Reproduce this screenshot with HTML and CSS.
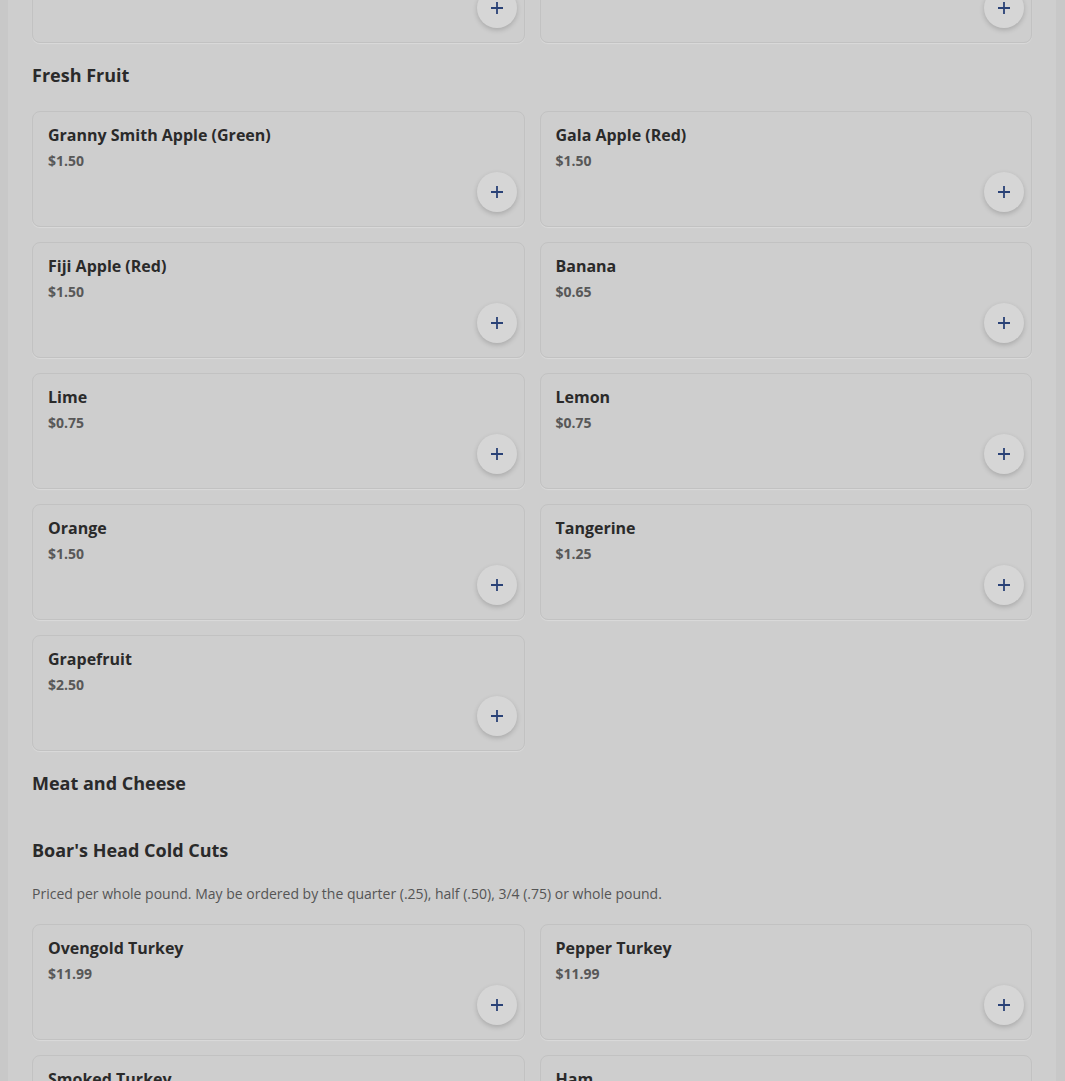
FILE: index.html
```html
<!DOCTYPE html>
<html lang="en">
<head>
<meta charset="utf-8">
<title>Menu</title>
<link rel="stylesheet" href="styles.css">
</head>
<body>
<main class="page">
  <section class="section section-prev">
    <div class="grid">
      <div class="card"><div class="card-title">&nbsp;</div><div class="card-price">&nbsp;</div><button class="add" aria-label="Add"><svg viewBox="0 0 16 16"><path d="M8 2v12M2 8h12"/></svg></button></div>
      <div class="card"><div class="card-title">&nbsp;</div><div class="card-price">&nbsp;</div><button class="add" aria-label="Add"><svg viewBox="0 0 16 16"><path d="M8 2v12M2 8h12"/></svg></button></div>
    </div>
  </section>

  <section class="section">
    <h2 class="heading">Fresh Fruit</h2>
    <div class="grid">
      <div class="card"><div class="card-title">Granny Smith Apple (Green)</div><div class="card-price">$1.50</div><button class="add" aria-label="Add"><svg viewBox="0 0 16 16"><path d="M8 2v12M2 8h12"/></svg></button></div>
      <div class="card"><div class="card-title">Gala Apple (Red)</div><div class="card-price">$1.50</div><button class="add" aria-label="Add"><svg viewBox="0 0 16 16"><path d="M8 2v12M2 8h12"/></svg></button></div>
      <div class="card"><div class="card-title">Fiji Apple (Red)</div><div class="card-price">$1.50</div><button class="add" aria-label="Add"><svg viewBox="0 0 16 16"><path d="M8 2v12M2 8h12"/></svg></button></div>
      <div class="card"><div class="card-title">Banana</div><div class="card-price">$0.65</div><button class="add" aria-label="Add"><svg viewBox="0 0 16 16"><path d="M8 2v12M2 8h12"/></svg></button></div>
      <div class="card"><div class="card-title">Lime</div><div class="card-price">$0.75</div><button class="add" aria-label="Add"><svg viewBox="0 0 16 16"><path d="M8 2v12M2 8h12"/></svg></button></div>
      <div class="card"><div class="card-title">Lemon</div><div class="card-price">$0.75</div><button class="add" aria-label="Add"><svg viewBox="0 0 16 16"><path d="M8 2v12M2 8h12"/></svg></button></div>
      <div class="card"><div class="card-title">Orange</div><div class="card-price">$1.50</div><button class="add" aria-label="Add"><svg viewBox="0 0 16 16"><path d="M8 2v12M2 8h12"/></svg></button></div>
      <div class="card"><div class="card-title">Tangerine</div><div class="card-price">$1.25</div><button class="add" aria-label="Add"><svg viewBox="0 0 16 16"><path d="M8 2v12M2 8h12"/></svg></button></div>
      <div class="card"><div class="card-title">Grapefruit</div><div class="card-price">$2.50</div><button class="add" aria-label="Add"><svg viewBox="0 0 16 16"><path d="M8 2v12M2 8h12"/></svg></button></div>
    </div>
  </section>

  <section class="section">
    <h2 class="heading">Meat and Cheese</h2>
    <section class="subsection">
      <h3 class="heading heading-sub">Boar's Head Cold Cuts</h3>
      <p class="desc">Priced per whole pound. May be ordered by the quarter (.25), half (.50), 3/4 (.75) or whole pound.</p>
      <div class="grid">
        <div class="card"><div class="card-title">Ovengold Turkey</div><div class="card-price">$11.99</div><button class="add" aria-label="Add"><svg viewBox="0 0 16 16"><path d="M8 2v12M2 8h12"/></svg></button></div>
        <div class="card"><div class="card-title">Pepper Turkey</div><div class="card-price">$11.99</div><button class="add" aria-label="Add"><svg viewBox="0 0 16 16"><path d="M8 2v12M2 8h12"/></svg></button></div>
        <div class="card"><div class="card-title">Smoked Turkey</div><div class="card-price">$11.99</div><button class="add" aria-label="Add"><svg viewBox="0 0 16 16"><path d="M8 2v12M2 8h12"/></svg></button></div>
        <div class="card"><div class="card-title">Ham</div><div class="card-price">$9.99</div><button class="add" aria-label="Add"><svg viewBox="0 0 16 16"><path d="M8 2v12M2 8h12"/></svg></button></div>
      </div>
    </section>
  </section>
</main>
</body>
</html>
```

FILE: styles.css
```css
html, body {
  margin: 0;
  padding: 0;
}
body {
  background: #c8c8c8;
  font-family: "Open Sans", "Noto Sans", "Liberation Sans", sans-serif;
  color: #2b2b2b;
  overflow: hidden;
  height: 1081px;
}
.page {
  margin: 0 9px 0 8px;
  background: #cecece;
  padding: 0 24px;
  min-height: 1200px;
  box-sizing: border-box;
}
.section-prev {
  margin-top: -73px;
}
.section + .section {
  padding-top: 20px;
}
.heading {
  margin: 0 0 24px;
  font-size: 18px;
  line-height: 24px;
  font-weight: 700;
  color: #2a2a2a;
}
.subsection {
  padding-top: 20px;
}
.section .heading + .subsection {
  margin-top: -1px;
}
.heading-sub {
  margin-bottom: 22px;
}
.desc {
  margin: 0 0 20px;
  font-size: 14px;
  line-height: 20px;
  color: #555;
}
.grid {
  display: grid;
  grid-template-columns: 1fr 1fr;
  gap: 15px;
}
.card {
  height: 116px;
  box-sizing: border-box;
  border: 1px solid #c2c2c2;
  border-radius: 8px;
  padding: 12px 7px 14px 15px;
  display: flex;
  flex-direction: column;
  box-shadow: 0 1px 1px rgba(255,255,255,0.25);
}
.card-title {
  font-size: 16px;
  line-height: 22px;
  font-weight: 700;
  color: #2a2a2a;
}
.card-price {
  margin-top: 5px;
  font-size: 14px;
  line-height: 20px;
  font-weight: 700;
  color: #585858;
}
.add {
  margin-top: auto;
  align-self: flex-end;
  width: 40px;
  height: 40px;
  border-radius: 50%;
  border: none;
  padding: 0;
  background: #d6d6d6;
  box-shadow: 0 2px 5px rgba(0,0,0,0.18);
  display: flex;
  align-items: center;
  justify-content: center;
  cursor: pointer;
}
.add svg {
  width: 16px;
  height: 16px;
  fill: none;
  stroke: #2a4277;
  stroke-width: 1.8;
}
```
